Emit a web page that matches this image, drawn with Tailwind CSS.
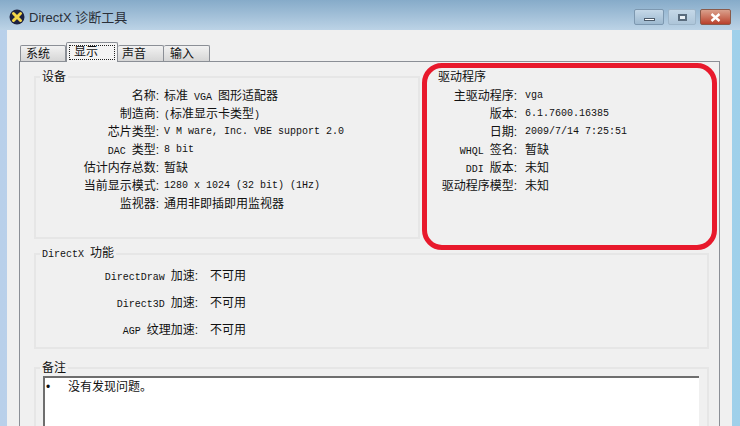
<!DOCTYPE html>
<html lang="zh">
<head>
<meta charset="utf-8">
<script src="https://cdn.jsdelivr.net/npm/@tailwindcss/browser@4"></script>
</head>
<body class="m-0">
<div class="relative w-[740px] h-[426px] overflow-hidden flex flex-col bg-gradient-to-r from-[#b9d0ea] via-[#c9dcee] to-[#9fd0ea] font-['Liberation_Sans','Noto_Sans_CJK_SC',sans-serif] text-[12px] leading-[18px] text-[#111]">
  <!-- title bar -->
  <div class="h-[30px] shrink-0 flex items-start pl-[9px] pr-[9px] pt-[9px] bg-gradient-to-b from-[#86abc9] to-[#bcd3e6]">
    <svg class="w-[16px] h-[16px]" viewBox="0 0 16 16"><circle cx="8" cy="8" r="7.5" fill="#1d2140"/><path d="M4.5 4.5 L11.5 11.5 M11.5 4.5 L4.5 11.5" stroke="#f3d64a" stroke-width="3" stroke-linecap="round"/></svg>
    <span class="ml-[4px] text-[13px] text-[#2a2f38]">DirectX 诊断工具</span>
    <div class="ml-auto flex items-start gap-[4px]">
      <div class="w-[30px] h-[16px] rounded-[2px] border border-[#7d98b0] bg-gradient-to-b from-[#c5d8e8] to-[#9db9d0] flex items-center justify-center"><div class="mt-[4px] w-[11px] h-[3px] bg-white border border-[#4d5c6c]"></div></div>
      <div class="w-[28px] h-[16px] rounded-[2px] border border-[#9db5c9] bg-gradient-to-b from-[#c5d8e8] to-[#adc5d9] flex items-center justify-center"><div class="w-[9px] h-[7px] border-2 border-[#5a6c7e] bg-white/70"></div></div>
      <div class="w-[31px] h-[16px] rounded-[2px] border border-[#8a5a4a] bg-gradient-to-b from-[#d9a08c] to-[#b8402c] flex items-center justify-center"><svg class="w-[11px] h-[9px]" viewBox="0 0 11 9"><path d="M1.5 1 L9.5 8 M9.5 1 L1.5 8" stroke="#fff" stroke-width="2.4"/></svg></div>
    </div>
  </div>

  <!-- window client -->
  <div class="flex-1 mx-[7px] w-[725px] bg-[#f0f0f0] px-[12px] pt-[11px] flex flex-col">
    <div class="flex items-end h-[20px] pl-[1px]">
      <div class="w-[46px] h-[16px] border border-b-0 border-[#8b8f96] rounded-t-[2px] bg-gradient-to-b from-[#f2f2f2] to-[#d6d6d6] pl-[5px] leading-[16px]">系统</div>
      <div class="w-[52px] h-[20px] border border-b-0 border-[#8b8f96] rounded-t-[2px] bg-[#f4f4f4] pt-[2px] pl-[2px] relative z-10 -mb-[1px]"><span class="block w-[46px] h-[15px] border border-dotted border-[#222] pl-[4px] leading-[13px]">显示</span></div>
      <div class="w-[46px] h-[16px] border border-b-0 border-l-0 border-[#8b8f96] rounded-t-[2px] bg-gradient-to-b from-[#f2f2f2] to-[#d6d6d6] pl-[4px] leading-[16px]">声音</div>
      <div class="w-[46px] h-[16px] border border-b-0 border-l-0 border-[#8b8f96] rounded-t-[2px] bg-gradient-to-b from-[#f2f2f2] to-[#d6d6d6] pl-[6px] leading-[16px]">输入</div>
    </div>

    <!-- tab page -->
    <div class="flex-1 border border-b-0 border-[#8b8f96] bg-[#f0f0f0] pl-[14px] pr-[10px] pt-[6px] flex flex-col">
      <div class="flex h-[171px]">
        <fieldset class="w-[386px] shrink-0 h-[171px] border-2 border-[#e6e6e6] pl-[7px]">
          <legend class="-ml-[3px] px-[2px]">设备</legend>
          <div class="flex flex-col mt-[1px]">
            <div class="flex h-[18px]"><div class="w-[116px] text-right">名称:</div><div class="ml-[5px]">标准<span class="font-['Liberation_Mono'] text-[10px]">&nbsp;VGA&nbsp;</span>图形适配器</div></div>
            <div class="flex h-[18px]"><div class="w-[116px] text-right">制造商:</div><div class="ml-[5px]"><span class="font-['Liberation_Mono'] text-[10px]">(</span>标准显示卡类型<span class="font-['Liberation_Mono'] text-[10px]">)</span></div></div>
            <div class="flex h-[18px]"><div class="w-[116px] text-right">芯片类型:</div><div class="ml-[5px] font-['Liberation_Mono'] text-[10px]">V M ware, Inc. VBE support 2.0</div></div>
            <div class="flex h-[18px]"><div class="w-[116px] text-right"><span class="font-['Liberation_Mono'] text-[10px]">DAC&nbsp;</span>类型:</div><div class="ml-[5px] font-['Liberation_Mono'] text-[10px]">8 bit</div></div>
            <div class="flex h-[18px]"><div class="w-[116px] text-right">估计内存总数:</div><div class="ml-[5px]">暂缺</div></div>
            <div class="flex h-[18px]"><div class="w-[116px] text-right">当前显示模式:</div><div class="ml-[5px] font-['Liberation_Mono'] text-[10px]">1280 x 1024 (32 bit) (1Hz)</div></div>
            <div class="flex h-[18px]"><div class="w-[116px] text-right">监视器:</div><div class="ml-[5px]">通用非即插即用监视器</div></div>
          </div>
        </fieldset>
        <div class="w-[289px] pl-[18px]">
          <div class="h-[19px]">驱动程序</div>
          <div class="flex flex-col">
            <div class="flex h-[18px]"><div class="w-[79px] text-right">主驱动程序:</div><div class="ml-[8px] font-['Liberation_Mono'] text-[10px]">vga</div></div>
            <div class="flex h-[18px]"><div class="w-[79px] text-right">版本:</div><div class="ml-[8px] font-['Liberation_Mono'] text-[10px]">6.1.7600.16385</div></div>
            <div class="flex h-[18px]"><div class="w-[79px] text-right">日期:</div><div class="ml-[8px] font-['Liberation_Mono'] text-[10px]">2009/7/14 7:25:51</div></div>
            <div class="flex h-[18px]"><div class="w-[79px] text-right"><span class="font-['Liberation_Mono'] text-[10px]">WHQL&nbsp;</span>签名:</div><div class="ml-[8px]">暂缺</div></div>
            <div class="flex h-[18px]"><div class="w-[79px] text-right"><span class="font-['Liberation_Mono'] text-[10px]">DDI&nbsp;</span>版本:</div><div class="ml-[8px]">未知</div></div>
            <div class="flex h-[18px]"><div class="w-[79px] text-right">驱动程序模型:</div><div class="ml-[8px]">未知</div></div>
          </div>
        </div>
      </div>

      <fieldset class="mt-[5px] w-[675px] h-[105px] border-2 border-[#e6e6e6]">
        <legend class="ml-[4px] px-[2px]"><span class="font-['Liberation_Mono'] text-[10px]">DirectX&nbsp;</span>功能</legend>
        <div class="flex flex-col gap-[9px] mt-[3px]">
          <div class="flex h-[18px]"><div class="w-[162px] text-right"><span class="font-['Liberation_Mono'] text-[10px]">DirectDraw&nbsp;</span>加速:</div><div class="ml-[12px]">不可用</div></div>
          <div class="flex h-[18px]"><div class="w-[162px] text-right"><span class="font-['Liberation_Mono'] text-[10px]">Direct3D&nbsp;</span>加速:</div><div class="ml-[12px]">不可用</div></div>
          <div class="flex h-[18px]"><div class="w-[162px] text-right"><span class="font-['Liberation_Mono'] text-[10px]">AGP&nbsp;</span>纹理加速:</div><div class="ml-[12px]">不可用</div></div>
        </div>
      </fieldset>

      <fieldset class="mt-[10px] w-[675px] flex-1 border-2 border-b-0 border-[#e6e6e6] pl-[7px] pr-[8px]">
        <legend class="-ml-[3px] px-[2px]">备注</legend>
        <div class="h-[60px] bg-white border-t-2 border-l-2 border-[#6e6e6e] flex -mt-[1px]">
          <span class="w-[23px] pl-[1px]">•</span><span>没有发现问题。</span>
        </div>
      </fieldset>
    </div>
  </div>

  <!-- red annotation -->
  <div class="absolute left-[422px] top-[63px] w-[295px] h-[187px] border-[5px] border-[#e8192c] rounded-[20px]"></div>
</div>
</body>
</html>
